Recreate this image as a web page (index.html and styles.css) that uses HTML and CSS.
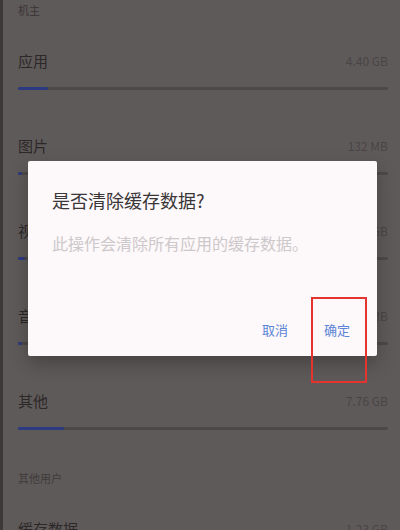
FILE: index.html
```html
<!DOCTYPE html>
<html lang="zh">
<head>
<meta charset="utf-8">
<link rel="stylesheet" href="styles.css">
</head>
<body>
<div class="page">
  <div class="section-label">机主</div>
  <div class="item">
    <div class="item-head"><span class="name">应用</span><span class="value">4.40 GB</span></div>
    <div class="bar"><div class="fill" style="width:8%"></div></div>
  </div>
  <div class="item">
    <div class="item-head"><span class="name">图片</span><span class="value">132 MB</span></div>
    <div class="bar"><div class="fill" style="width:1%"></div></div>
  </div>
  <div class="item">
    <div class="item-head"><span class="name">视频</span><span class="value">1.02 GB</span></div>
    <div class="bar"><div class="fill" style="width:2%"></div></div>
  </div>
  <div class="item">
    <div class="item-head"><span class="name">音频</span><span class="value">56 MB</span></div>
    <div class="bar"><div class="fill" style="width:1%"></div></div>
  </div>
  <div class="item">
    <div class="item-head"><span class="name">其他</span><span class="value">7.76 GB</span></div>
    <div class="bar"><div class="fill" style="width:12.4%"></div></div>
  </div>
  <div class="section-label second">其他用户</div>
  <div class="item">
    <div class="item-head"><span class="name">缓存数据</span><span class="value">1.23 GB</span></div>
  </div>
</div>

<div class="dialog">
  <div class="dialog-title">是否清除缓存数据?</div>
  <div class="dialog-msg">此操作会清除所有应用的缓存数据。</div>
  <div class="dialog-actions">
    <span class="btn">取消</span>
    <span class="btn">确定</span>
  </div>
</div>
<div class="highlight"></div>
</body>
</html>
```

FILE: styles.css
```css
html, body {
  margin: 0;
  padding: 0;
}
body {
  width: 400px;
  height: 530px;
  overflow: hidden;
  background: #5f5a5a;
  font-family: "Noto Sans CJK SC", "Noto Sans", sans-serif;
  position: relative;
}
.page {
  border-left: 3px solid #3e3939;
  padding: 0 12px 0 15px;
  height: 530px;
  box-sizing: border-box;
}
.section-label {
  font-size: 11px;
  line-height: 14px;
  color: #3a3535;
  padding-top: 3px;
  margin-bottom: 33px;
}
.section-label.second {
  padding-top: 0;
  margin-top: -4px;
  color: #3f3a3a;
}
.item-head {
  display: flex;
  justify-content: space-between;
  align-items: center;
  height: 20px;
}
.name {
  font-size: 15px;
  color: #2c2828;
}
.value {
  font-size: 12px;
  color: #4a4545;
}
.bar {
  margin-top: 17px;
  height: 3px;
  background: #4d4949;
  border-radius: 2px;
  margin-bottom: 45px;
}
.fill {
  height: 100%;
  background: #2c3a82;
  border-radius: 2px;
}
.dialog {
  position: absolute;
  left: 28px;
  top: 161px;
  width: 349px;
  height: 195px;
  box-sizing: border-box;
  background: #fdf8fa;
  border-radius: 2px;
  padding: 27px 27px 16px 24px;
  display: flex;
  flex-direction: column;
  box-shadow: 0 8px 18px rgba(0, 0, 0, 0.25);
}
.dialog-title {
  font-size: 18px;
  line-height: 24px;
  color: #3a3637;
}
.dialog-msg {
  margin-top: 20px;
  font-size: 16px;
  line-height: 22px;
  color: #cdc8ca;
}
.dialog-actions {
  margin-top: auto;
  display: flex;
  justify-content: flex-end;
  gap: 36px;
}
.btn {
  font-size: 13px;
  line-height: 20px;
  color: #5a84d6;
}
.highlight {
  position: absolute;
  left: 311px;
  top: 297px;
  width: 56px;
  height: 86px;
  box-sizing: border-box;
  border: 2.5px solid #e5342f;
}
```
